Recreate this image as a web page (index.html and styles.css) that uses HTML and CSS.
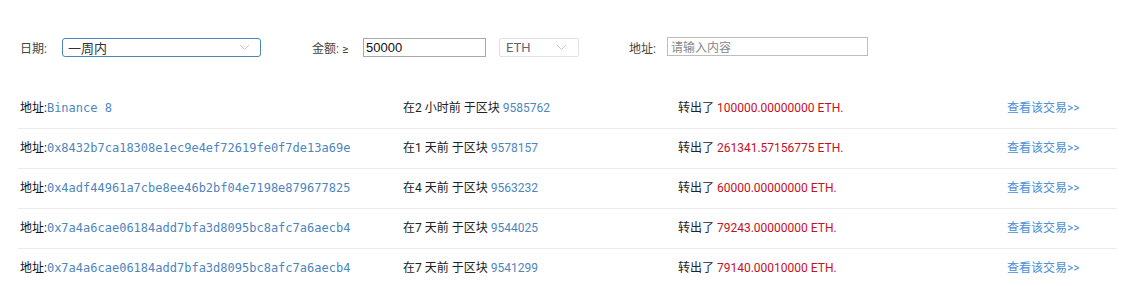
FILE: index.html
```html
<!DOCTYPE html>
<html lang="zh">
<head>
<meta charset="utf-8">
<link rel="stylesheet" href="styles.css">
</head>
<body>
<div class="page">
  <div class="filters">
    <span class="label label-date">日期:</span>
    <div class="select select-date">
      <span>一周内</span>
      <svg class="chev" width="11" height="7" viewBox="0 0 11 7"><path d="M1 1 L5.5 5.5 L10 1" fill="none" stroke="#c8c8c8" stroke-width="1"/></svg>
    </div>
    <span class="label label-amount">金额: ≥</span>
    <div class="input input-amount">50000</div>
    <div class="select select-unit">
      <span>ETH</span>
      <svg class="chev" width="11" height="7" viewBox="0 0 11 7"><path d="M1 1 L5.5 5.5 L10 1" fill="none" stroke="#c8c8c8" stroke-width="1"/></svg>
    </div>
    <span class="label label-addr">地址:</span>
    <div class="input input-addr placeholder">请输入内容</div>
  </div>
  <div class="list">
    <div class="row">
      <div class="c1">地址:<span class="hash">Binance 8</span></div>
      <div class="c2">在2 小时前 于区块 <span class="blue">9585762</span></div>
      <div class="c3">转出了 <span class="red">100000.00000000 ETH.</span></div>
      <div class="c4"><span class="link">查看该交易&gt;&gt;</span></div>
    </div>
    <div class="row">
      <div class="c1">地址:<span class="hash">0x8432b7ca18308e1ec9e4ef72619fe0f7de13a69e</span></div>
      <div class="c2">在1 天前 于区块 <span class="blue">9578157</span></div>
      <div class="c3">转出了 <span class="red">261341.57156775 ETH.</span></div>
      <div class="c4"><span class="link">查看该交易&gt;&gt;</span></div>
    </div>
    <div class="row">
      <div class="c1">地址:<span class="hash">0x4adf44961a7cbe8ee46b2bf04e7198e879677825</span></div>
      <div class="c2">在4 天前 于区块 <span class="blue">9563232</span></div>
      <div class="c3">转出了 <span class="red">60000.00000000 ETH.</span></div>
      <div class="c4"><span class="link">查看该交易&gt;&gt;</span></div>
    </div>
    <div class="row">
      <div class="c1">地址:<span class="hash">0x7a4a6cae06184add7bfa3d8095bc8afc7a6aecb4</span></div>
      <div class="c2">在7 天前 于区块 <span class="blue">9544025</span></div>
      <div class="c3">转出了 <span class="red">79243.00000000 ETH.</span></div>
      <div class="c4"><span class="link">查看该交易&gt;&gt;</span></div>
    </div>
    <div class="row">
      <div class="c1">地址:<span class="hash">0x7a4a6cae06184add7bfa3d8095bc8afc7a6aecb4</span></div>
      <div class="c2">在7 天前 于区块 <span class="blue">9541299</span></div>
      <div class="c3">转出了 <span class="red">79140.00010000 ETH.</span></div>
      <div class="c4"><span class="link">查看该交易&gt;&gt;</span></div>
    </div>
  </div>
</div>
</body>
</html>
```

FILE: styles.css
```css
html, body {
  margin: 0;
  padding: 0;
  background: #fff;
}
body {
  font-family: Roboto, "Noto Sans CJK SC", sans-serif;
  font-size: 12px;
  color: #222;
}
.page {
  width: 1129px;
  height: 286px;
  overflow: hidden;
}
.filters {
  display: flex;
  align-items: center;
  height: 19px;
  margin-top: 38px;
  padding-left: 20px;
}
.label {
  color: #444;
  font-size: 12px;
  white-space: nowrap;
}
.label-date { width: 42px; }
.label-amount { margin-left: 51px; width: 50px; }
.label-addr { margin-left: 50px; width: 41px; }
.select {
  box-sizing: border-box;
  height: 19px;
  display: flex;
  align-items: center;
  justify-content: space-between;
  padding: 0 6px 0 5px;
  background: #fff;
}
.select-date {
  width: 199px;
  border: 1px solid #4a86b8;
  border-radius: 3px;
  font-size: 13px;
  color: #333;
  padding-right: 10px;
}
.select-unit {
  width: 80px;
  margin-left: 13px;
  border: 1px solid #e2e2e2;
  border-radius: 2px;
  font-size: 13px;
  color: #666;
  padding-left: 6px;
  padding-right: 11px;
}
.input {
  box-sizing: border-box;
  height: 19px;
  display: flex;
  align-items: center;
  padding-left: 2px;
  font-size: 13px;
}
.input-amount {
  width: 123px;
  margin-left: 1px;
  border: 1px solid #a9a9a9;
  color: #111;
  font-family: "Liberation Sans", Roboto, sans-serif;
}
.input-addr {
  width: 201px;
  height: 19px;
  border: 1px solid #bdbdbd;
  margin-left: -3px;
  margin-top: -2px;
  font-size: 12px;
  color: #888;
  padding-left: 3px;
}
.list {
  margin-top: 32px;
  margin-left: 18px;
  width: 1099px;
}
.row {
  display: grid;
  grid-template-columns: 383px 275px 329px 1fr;
  box-sizing: border-box;
  height: 40px;
  padding: 11px 0 0 2px;
  line-height: 16px;
  border-bottom: 1px solid #ececec;
  white-space: nowrap;
}
.row:last-child { border-bottom: none; }
.c1 { color: #111; }
.hash {
  font-family: "DejaVu Sans Mono", monospace;
  font-size: 12px;
  color: #4d86bd;
}
.c2, .c3 { color: #222; }
.blue { color: #4d86bd; }
.red { color: #c8101e; }
.link { color: #4a8fd9; }
```
